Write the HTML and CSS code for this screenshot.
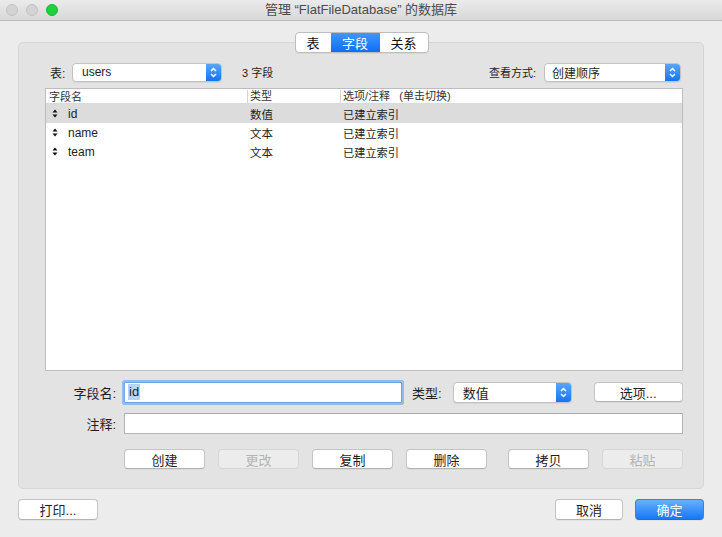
FILE: index.html
```html
<!DOCTYPE html>
<html lang="zh">
<head>
<meta charset="utf-8">
<title>管理数据库</title>
<link rel="stylesheet" href="styles.css">
</head>
<body>
<div class="window">
  <header class="titlebar">
    <div class="lights">
      <span class="light gray"></span>
      <span class="light gray"></span>
      <span class="light green"></span>
    </div>
    <div class="title">管理 “FlatFileDatabase” 的数据库</div>
    <div></div>
  </header>

  <main class="main">
    <nav class="tabs">
      <span class="seg seg-a">表</span>
      <span class="seg seg-b active">字段</span>
      <span class="seg seg-c">关系</span>
    </nav>

    <section class="panel">
      <div class="toprow">
        <span class="lbl-table">表:</span>
        <div class="popup popup-table">
          <span class="popup-text">users</span>
          <span class="popup-arrow"><svg width="9" height="13" viewBox="0 0 9 13"><polyline points="2,5 4.5,2.5 7,5" fill="none" stroke="#fff" stroke-width="1.5"/><polyline points="2,8 4.5,10.5 7,8" fill="none" stroke="#fff" stroke-width="1.5"/></svg></span>
        </div>
        <span class="count">3 字段</span>
        <span class="spacer"></span>
        <span class="lbl-view">查看方式:</span>
        <div class="popup popup-view">
          <span class="popup-text">创建顺序</span>
          <span class="popup-arrow"><svg width="9" height="13" viewBox="0 0 9 13"><polyline points="2,5 4.5,2.5 7,5" fill="none" stroke="#fff" stroke-width="1.5"/><polyline points="2,8 4.5,10.5 7,8" fill="none" stroke="#fff" stroke-width="1.5"/></svg></span>
        </div>
      </div>

      <div class="table">
        <div class="thead">
          <span class="c1">字段名</span>
          <span class="c2 sep">类型</span>
          <span class="c3 sep">选项/注释 &nbsp;&nbsp;(单击切换)</span>
        </div>
        <div class="row sel">
          <span class="c1"><svg class="sort" width="6" height="9" viewBox="0 0 6 9"><polygon points="0.5,3.6 3,0.6 5.5,3.6" fill="#111"/><polygon points="0.5,5.4 3,8.4 5.5,5.4" fill="#111"/></svg>id</span>
          <span class="c2">数值</span>
          <span class="c3">已建立索引</span>
        </div>
        <div class="row">
          <span class="c1"><svg class="sort" width="6" height="9" viewBox="0 0 6 9"><polygon points="0.5,3.6 3,0.6 5.5,3.6" fill="#111"/><polygon points="0.5,5.4 3,8.4 5.5,5.4" fill="#111"/></svg>name</span>
          <span class="c2">文本</span>
          <span class="c3">已建立索引</span>
        </div>
        <div class="row">
          <span class="c1"><svg class="sort" width="6" height="9" viewBox="0 0 6 9"><polygon points="0.5,3.6 3,0.6 5.5,3.6" fill="#111"/><polygon points="0.5,5.4 3,8.4 5.5,5.4" fill="#111"/></svg>team</span>
          <span class="c2">文本</span>
          <span class="c3">已建立索引</span>
        </div>
      </div>

      <div class="formrow row-name">
        <span class="flabel">字段名:</span>
        <div class="input input-name focused"><span class="selected-text">id</span></div>
        <span class="lbl-type">类型:</span>
        <div class="popup popup-type">
          <span class="popup-text">数值</span>
          <span class="popup-arrow"><svg width="9" height="13" viewBox="0 0 9 13"><polyline points="2,5 4.5,2.5 7,5" fill="none" stroke="#fff" stroke-width="1.5"/><polyline points="2,8 4.5,10.5 7,8" fill="none" stroke="#fff" stroke-width="1.5"/></svg></span>
        </div>
        <button class="btn btn-options">选项...</button>
      </div>

      <div class="formrow row-note">
        <span class="flabel">注释:</span>
        <div class="input input-note"></div>
      </div>

      <div class="btnrow">
        <button class="btn">创建</button>
        <button class="btn disabled">更改</button>
        <button class="btn">复制</button>
        <button class="btn">删除</button>
        <button class="btn gap-wide">拷贝</button>
        <button class="btn disabled">粘贴</button>
      </div>
    </section>

    <div class="bottom">
      <button class="btn btn-print">打印...</button>
      <span class="spacer"></span>
      <button class="btn btn-cancel">取消</button>
      <button class="btn btn-ok">确定</button>
    </div>
  </main>
</div>
</body>
</html>
```

FILE: styles.css
```css
* { box-sizing: border-box; }

html, body {
  margin: 0;
  padding: 0;
}

body {
  width: 722px;
  height: 537px;
  overflow: hidden;
  background: #ececec;
  font-family: "Liberation Sans", "Noto Sans CJK SC", sans-serif;
  font-size: 12px;
  color: #1e1e1e;
}

.window {
  width: 722px;
  height: 537px;
  display: flex;
  flex-direction: column;
}

/* Title bar */
.titlebar {
  height: 21px;
  display: grid;
  grid-template-columns: 1fr auto 1fr;
  align-items: center;
  background: linear-gradient(#ebebeb, #d8d8d8);
  border-bottom: 1px solid #bdbdbd;
}

.lights {
  display: flex;
  gap: 8px;
  padding-left: 6px;
  align-items: center;
}

.light {
  width: 12px;
  height: 12px;
  border-radius: 50%;
}

.light.gray {
  background: #d3d3d3;
  border: 1px solid #c4c4c4;
}

.light.green {
  background: #20d03e;
  border: 1px solid #16b833;
}

.title {
  font-size: 13px;
  color: #4b4b4b;
  line-height: 20px;
}

/* Main */
.main {
  display: flex;
  flex-direction: column;
  padding: 11px 18px 0 18px;
}

.tabs {
  align-self: center;
  display: flex;
  height: 21px;
  margin-left: 1px;
  margin-bottom: -11px;
  position: relative;
  z-index: 1;
  background: #fff;
  border: 1px solid #bdbdbd;
  border-radius: 4px;
  overflow: hidden;
  box-shadow: 0 1px 0 rgba(0, 0, 0, 0.05);
}

.seg {
  display: flex;
  align-items: center;
  justify-content: center;
  font-size: 13px;
  color: #111;
}

.seg-a { width: 35px; }
.seg-b { width: 49px; }
.seg-c { width: 48px; }

.seg.active {
  background: linear-gradient(#3e98fc, #0f6ef6);
  color: #fff;
}

.panel {
  height: 447px;
  background: #e3e3e3;
  border: 1px solid #d6d6d6;
  border-radius: 5px;
  padding: 20px 20px 0 26px;
  display: flex;
  flex-direction: column;
}

/* Top row */
.toprow {
  height: 18px;
  display: flex;
  align-items: center;
}

.lbl-table {
  margin-left: 5px;
  width: 22px;
}

.popup {
  height: 19px;
  display: flex;
  align-items: stretch;
  background: #fff;
  border: 1px solid #c3c3c3;
  border-radius: 4px;
  overflow: hidden;
  box-shadow: 0 1px 0 rgba(0, 0, 0, 0.06);
}

.popup-text {
  flex: 1;
  display: flex;
  align-items: center;
  padding-left: 9px;
}

.popup-arrow {
  width: 15px;
  display: flex;
  align-items: center;
  justify-content: center;
  background: linear-gradient(#5aa6fc, #1176f7);
}

.popup-table { width: 150px; }

.count {
  margin-left: 20px;
  font-size: 11px;
}

.spacer { flex: 1; }

.lbl-view {
  margin-right: 8px;
  font-size: 11px;
}

.popup-view {
  width: 137px;
  margin-right: 2px;
}

.popup-view .popup-text {
  padding-left: 7px;
}

/* Table */
.table {
  margin-top: 7px;
  height: 283px;
  background: #fff;
  border: 1px solid #bdbdbd;
}

.thead {
  height: 15px;
  display: flex;
  align-items: center;
  border-bottom: 1px solid #dadada;
  font-size: 11px;
  color: #333;
}

.thead .c1 { padding-left: 3px; }

.c1 {
  width: 201px;
  display: flex;
  align-items: center;
}

.c2 {
  width: 93px;
  padding-left: 3px;
}

.c3 {
  flex: 1;
  padding-left: 3px;
}

.thead .sep {
  border-left: 1px solid #d4d4d4;
  padding-left: 2px;
  line-height: 13px;
}

.row {
  height: 19px;
  display: flex;
  align-items: center;
}

.row .c1 { padding-left: 6px; }

.row.sel { background: #dcdcdc; }

.sort {
  margin-right: 10px;
}

.row .c2 { font-size: 11.5px; }
.row .c3 { font-size: 11.2px; }

/* Form rows */
.formrow {
  display: flex;
  align-items: center;
}

.row-name {
  margin-top: 10px;
  height: 22px;
}

.row-note {
  margin-top: 10px;
  height: 21px;
}

.flabel {
  width: 79px;
  text-align: right;
  padding-right: 8px;
  font-size: 13px;
}

.input {
  height: 21px;
  background: #fff;
  border: 1px solid #b4b4b4;
  border-top-color: #a9a9a9;
  display: flex;
  align-items: center;
  padding-left: 3px;
  font-size: 13px;
}

.input-name {
  width: 278px;
  height: 21px;
}

.input.focused {
  border-color: #6fa3e6;
  box-shadow: 0 0 0 2px #8dbbf2;
  border-radius: 1px;
}

.selected-text {
  background: #b4d6fd;
  line-height: 16px;
  padding: 0 1px;
}

.input-note {
  flex: 1;
}

.lbl-type {
  margin-left: 10px;
  font-size: 13px;
}

.popup-type {
  width: 119px;
  height: 21px;
  margin-left: 11px;
  font-size: 13px;
}

/* Buttons */
.btn {
  font-family: inherit;
  font-size: 13px;
  color: #1e1e1e;
  height: 20px;
  padding: 0;
  background: #fff;
  border: 1px solid #c4c4c4;
  border-bottom-color: #b2b2b2;
  border-radius: 4px;
  display: flex;
  align-items: center;
  justify-content: center;
  box-shadow: 0 1px 0 rgba(0, 0, 0, 0.04);
}

.btn.disabled {
  background: #ececec;
  border-color: #d6d6d6;
  color: #b4b4b4;
  box-shadow: none;
}

.btn-options {
  width: 89px;
  margin-left: 22px;
}

.btnrow {
  margin-top: 15px;
  display: flex;
  gap: 13px;
  padding-left: 79px;
}

.btnrow .btn {
  width: 81px;
}

.btnrow .gap-wide {
  margin-left: 8px;
}

.bottom {
  margin-top: 10px;
  display: flex;
  gap: 12px;
  height: 21px;
}

.bottom .btn { height: 21px; }

.btn-print { width: 80px; }
.btn-cancel { width: 68px; }

.btn-ok {
  width: 69px;
  color: #fff;
  background: linear-gradient(#69b0fc, #1478f7);
  border-color: #2c85f5;
  border-bottom-color: #1a6fe0;
}
```
